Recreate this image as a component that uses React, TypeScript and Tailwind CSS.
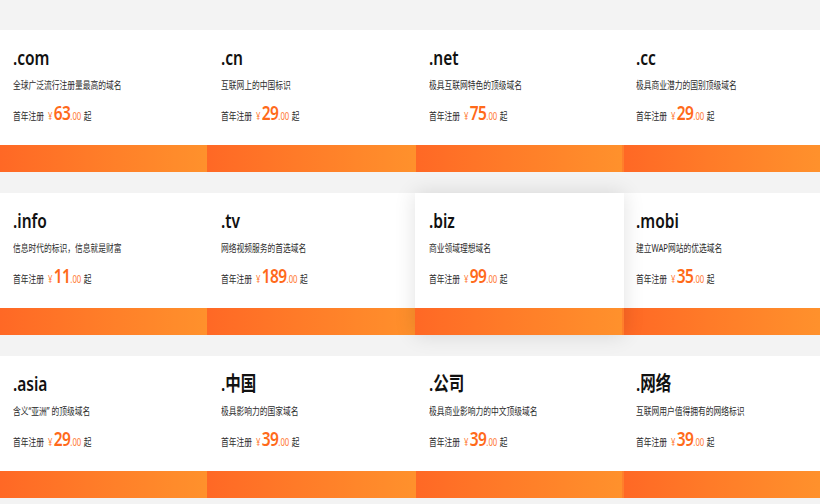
const rows = [
	[
		{ name: ".com", desc: "全球广泛流行注册量最高的域名", price: "63" },
		{ name: ".cn", desc: "互联网上的中国标识", price: "29" },
		{ name: ".net", desc: "极具互联网特色的顶级域名", price: "75" },
		{ name: ".cc", desc: "极具商业潜力的国别顶级域名", price: "29" },
	],
	[
		{ name: ".info", desc: "信息时代的标识，信息就是财富", price: "11" },
		{ name: ".tv", desc: "网络视频服务的首选域名", price: "189" },
		{ name: ".biz", desc: "商业领域理想域名", price: "99", active: true },
		{ name: ".mobi", desc: "建立WAP网站的优选域名", price: "35" },
	],
	[
		{ name: ".asia", desc: "含义“亚洲” 的顶级域名", price: "29" },
		{ name: ".中国", desc: "极具影响力的国家域名", price: "39" },
		{ name: ".公司", desc: "极具商业影响力的中文顶级域名", price: "39" },
		{ name: ".网络", desc: "互联网用户值得拥有的网络标识", price: "39" },
	],
];

type Domain = { name: string; desc: string; price: string; active?: boolean };

function DomainCard({ item, col }: { item: Domain; col: number }) {
	const pad = ["pl-[13px]", "pl-[14px]", "pl-[13px]", "pl-[12px]"][col];
	return (
		<div
			className={`flex h-[142px] flex-col bg-white ${
				item.active ? "relative z-10 -ml-px shadow-[0_0_20px_rgba(0,0,0,0.12)]" : ""
			}`}
		>
			<div className={`flex-1 overflow-hidden ${pad} ${item.active ? "ml-px" : ""}`}>
				<div className="origin-left scale-x-[0.775] whitespace-nowrap text-[#2b2b2b]">
					<h3 className="mt-[13px] h-[30px] text-[20px] leading-[30px] font-semibold text-[#111]">
						{item.name}
					</h3>
					<p className="mt-[4px] h-[16px] text-[10px] leading-[16px]">{item.desc}</p>
					<div className="mt-[8px] flex h-[24px] items-baseline text-[10px] leading-[24px]">
						<span>首年注册</span>
						<span className="ml-[5px] text-[#ff7a33]">¥</span>
						<span className="ml-[2px] text-[20px] font-semibold tracking-[-0.8px] text-[#ff6a1a]">
							{item.price}
						</span>
						<span className="text-[#ff7a33]">.00</span>
						<span className="ml-[3px]">起</span>
					</div>
				</div>
			</div>
			<div
				className={`h-[27px] bg-gradient-to-r from-[#ff6825] to-[#ff912c] ${
					col === 2 ? "border-r-2 border-[#ff7f2b]" : ""
				}`}
			/>
		</div>
	);
}

export default function App() {
	return (
		<div
			className="flex h-[504px] w-[820px] flex-col gap-[21px] overflow-hidden bg-[#f3f3f3] pt-[30px]"
			style={{ fontFamily: '"Noto Sans", "Noto Sans CJK SC", sans-serif' }}
		>
			{rows.map((row, r) => (
				<div key={r} className="grid grid-cols-[207px_209px_208px_196px]">
					{row.map((item, c) => (
						<DomainCard key={item.name} item={item} col={c} />
					))}
				</div>
			))}
		</div>
	);
}
